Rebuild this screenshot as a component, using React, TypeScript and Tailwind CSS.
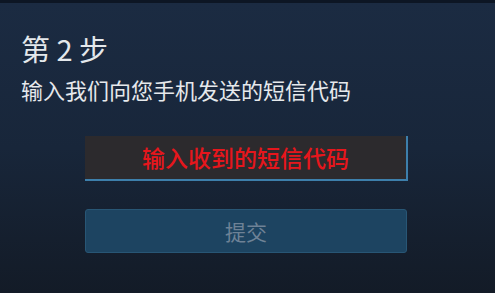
export default function App() {
  return (
    <div
      className="w-[495px] h-[293px] overflow-hidden bg-gradient-to-b from-[#1b2b42] via-[#18263a] to-[#131b27] border-t-[3px] border-[#0d1624]"
      style={{ fontFamily: '"Noto Sans CJK SC", "Noto Sans", sans-serif' }}
    >
      <div className="pl-[21px] pt-[30px]">
        <h1 className="text-[29px] leading-[30px] text-[#e4e8ec]">第 2 步</h1>
        <p className="mt-[14px] text-[22px] leading-[24px] text-[#e6e9ec]">
          输入我们向您手机发送的短信代码
        </p>
      </div>

      <div className="ml-[85px] mt-[35px] w-[323px] flex flex-col gap-[28px]">
        <div className="h-[45px] bg-[#2c2a2d] border-r-2 border-b-2 border-[#3d7fab] flex items-center justify-center">
          <span className="text-[23px] leading-none font-medium text-[#e6161c]">输入收到的短信代码</span>
        </div>
        <button className="h-[44px] w-[322px] rounded-[3px] bg-[#1d4461] border border-[#285675] flex items-center justify-center">
          <span className="text-[21px] leading-none text-[#6e8296]">提交</span>
        </button>
      </div>
    </div>
  );
}
